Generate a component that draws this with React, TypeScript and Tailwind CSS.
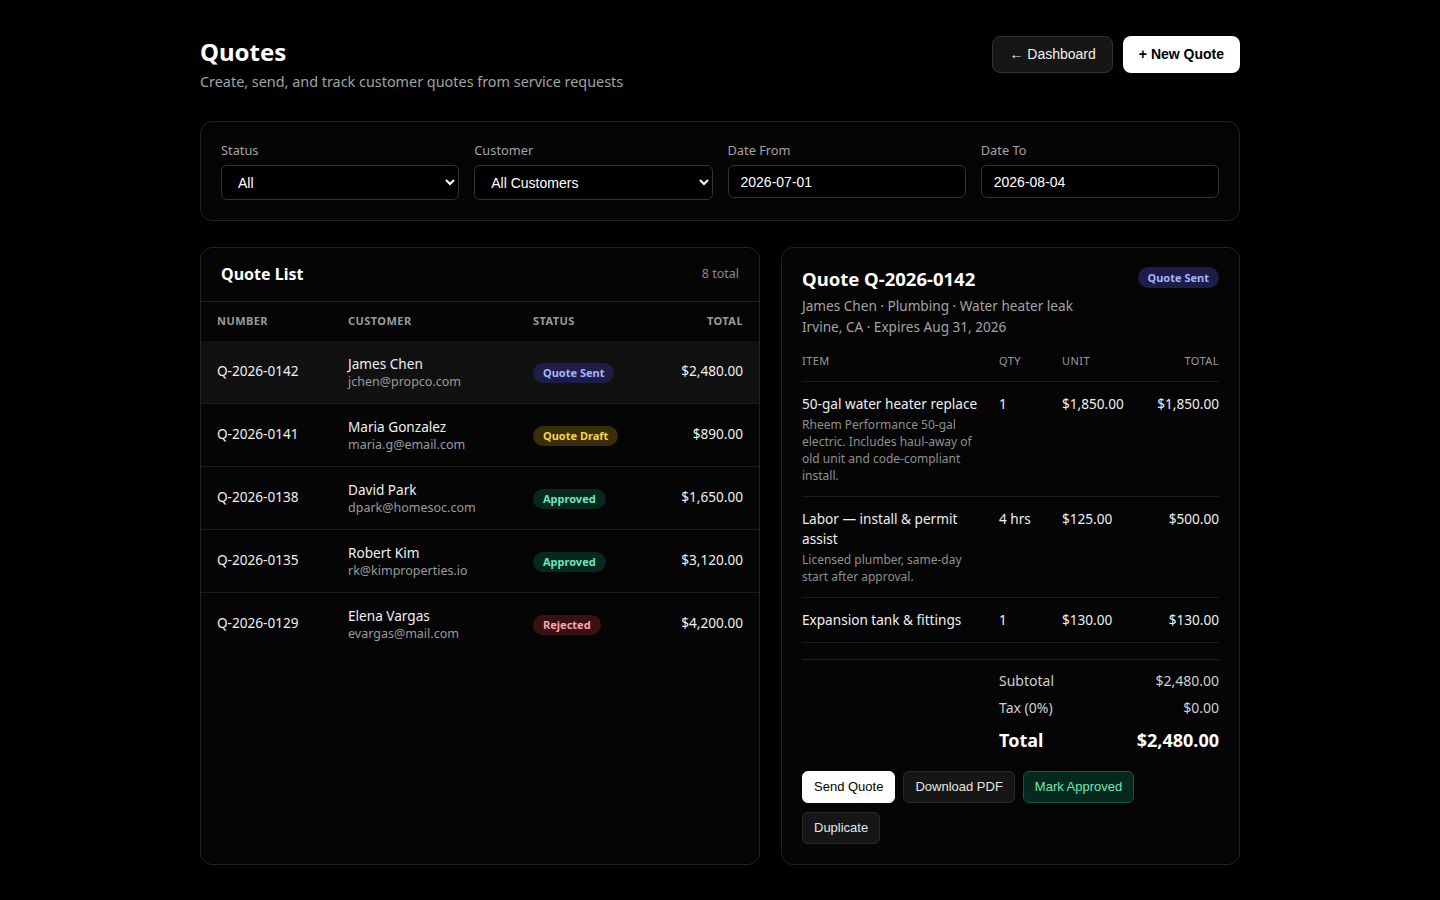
import { useState } from "react";

type Status = "Quote Sent" | "Quote Draft" | "Approved" | "Rejected";

type Quote = {
  number: string;
  name: string;
  email: string;
  status: Status;
  total: string;
};

const quotes: Quote[] = [
  { number: "Q-2026-0142", name: "James Chen", email: "jchen@propco.com", status: "Quote Sent", total: "$2,480.00" },
  { number: "Q-2026-0141", name: "Maria Gonzalez", email: "maria.g@email.com", status: "Quote Draft", total: "$890.00" },
  { number: "Q-2026-0138", name: "David Park", email: "dpark@homesoc.com", status: "Approved", total: "$1,650.00" },
  { number: "Q-2026-0135", name: "Robert Kim", email: "rk@kimproperties.io", status: "Approved", total: "$3,120.00" },
  { number: "Q-2026-0129", name: "Elena Vargas", email: "evargas@mail.com", status: "Rejected", total: "$4,200.00" },
];

const items = [
  {
    name: "50-gal water heater replace",
    desc: "Rheem Performance 50-gal electric. Includes haul-away of old unit and code-compliant install.",
    qty: "1",
    unit: "$1,850.00",
    total: "$1,850.00",
  },
  {
    name: "Labor — install & permit assist",
    desc: "Licensed plumber, same-day start after approval.",
    qty: "4 hrs",
    unit: "$125.00",
    total: "$500.00",
  },
  { name: "Expansion tank & fittings", desc: "", qty: "1", unit: "$130.00", total: "$130.00" },
];

const badgeClass: Record<Status, string> = {
  "Quote Sent": "bg-[#1e1c48] text-[#a5b4fc]",
  "Quote Draft": "bg-[#3a2e06] text-[#fcd34d]",
  Approved: "bg-[#05291f] text-[#6ee7b7]",
  Rejected: "bg-[#3a1112] text-[#fca5a5]",
};

function Badge({ status }: { status: Status }) {
  return (
    <span className={`inline-block rounded-full px-2.5 py-[3px] text-[11px] font-bold leading-[14px] ${badgeClass[status]}`}>
      {status}
    </span>
  );
}

const controlFont = { fontFamily: '"Liberation Sans", Arial, sans-serif' };

export default function App() {
  const [selected, setSelected] = useState("Q-2026-0142");

  return (
    <div
      className="min-h-screen bg-black text-[#f5f5f5] [color-scheme:dark]"
      style={{ fontFamily: '"Noto Sans", "Open Sans", sans-serif' }}
    >
      <div className="mx-auto w-[1040px] pt-9 pb-9">
        {/* Encabezado */}
        <div className="flex items-start justify-between">
          <div>
            <h1 className="text-[24px] font-bold leading-8 text-white">Quotes</h1>
            <p className="mt-[2px] text-[14.4px] leading-6 text-[#a3a3a3]">
              Create, send, and track customer quotes from service requests
            </p>
          </div>
          <div className="flex gap-2.5" style={controlFont}>
            <button className="h-[37px] rounded-lg border border-[#333] bg-[#161616] px-4 text-[14px] text-[#f0f0f0]">
              ← Dashboard
            </button>
            <button className="h-[37px] rounded-lg bg-white px-4 text-[14px] font-bold text-black">+ New Quote</button>
          </div>
        </div>

        {/* Filtros */}
        <div className="mt-[27px] grid grid-cols-4 gap-[15px] rounded-xl border border-[#222] bg-[#050505] px-5 pt-[18px] pb-5">
          <div>
            <label className="block text-[12.8px] leading-5 text-[#a3a3a3]">Status</label>
            <select
              className="mt-[5px] h-[35px] w-full rounded-md border border-[#333] bg-black px-3 text-[14px] text-white"
              style={controlFont}
            >
              <option>All</option>
            </select>
          </div>
          <div>
            <label className="block text-[12.8px] leading-5 text-[#a3a3a3]">Customer</label>
            <select
              className="mt-[5px] h-[35px] w-full rounded-md border border-[#333] bg-black px-3 text-[14px] text-white"
              style={controlFont}
            >
              <option>All Customers</option>
            </select>
          </div>
          <div>
            <label className="block text-[12.8px] leading-5 text-[#a3a3a3]">Date From</label>
            <input
              type="text"
              defaultValue="2026-07-01"
              className="mt-[5px] h-[33px] w-full rounded-md border border-[#333] bg-black px-3 text-[14px] text-white"
              style={controlFont}
            />
          </div>
          <div>
            <label className="block text-[12.8px] leading-5 text-[#a3a3a3]">Date To</label>
            <input
              type="text"
              defaultValue="2026-08-04"
              className="mt-[5px] h-[33px] w-full rounded-md border border-[#333] bg-black px-3 text-[14px] text-white"
              style={controlFont}
            />
          </div>
        </div>

        <div className="mt-[26px] grid grid-cols-[560px_1fr] gap-[21px]">
          {/* Lista de cotizaciones */}
          <div className="overflow-hidden rounded-xl border border-[#222] bg-[#050505]">
            <div className="flex items-center justify-between border-b border-[#222] px-5 py-4">
              <h2 className="text-[16px] font-bold leading-[21px] text-white">Quote List</h2>
              <span className="text-[12.5px] text-[#8a8a8a]">8 total</span>
            </div>
            <table className="w-full text-left">
              <thead>
                <tr className="text-[11px] font-bold uppercase tracking-[0.04em] text-[#9a9a9a]">
                  <th className="w-[131px] px-4 py-[11px] font-bold">Number</th>
                  <th className="w-[185px] px-4 py-[11px] font-bold">Customer</th>
                  <th className="px-4 py-[11px] font-bold">Status</th>
                  <th className="px-4 py-[11px] text-right font-bold">Total</th>
                </tr>
              </thead>
              <tbody>
                {quotes.map((q) => (
                  <tr
                    key={q.number}
                    onClick={() => setSelected(q.number)}
                    className={`cursor-pointer border-b border-[#1c1c1c] last:border-b-0 ${selected === q.number ? "bg-[#111]" : ""}`}
                  >
                    <td className="px-4 py-[13px] text-[13.6px] text-[#f0f0f0]">{q.number}</td>
                    <td className="px-4 py-[13px]">
                      <div className="text-[13.6px] leading-[19px] text-[#f0f0f0]">{q.name}</div>
                      <div className="text-[12.5px] leading-[17px] text-[#9a9a9a]">{q.email}</div>
                    </td>
                    <td className="px-4 pt-[10px] pb-3">
                      <Badge status={q.status} />
                    </td>
                    <td className="px-4 py-[13px] text-right text-[13.6px] text-[#f0f0f0]">{q.total}</td>
                  </tr>
                ))}
              </tbody>
            </table>
          </div>

          {/* Detalle de cotización */}
          <div className="rounded-xl border border-[#222] bg-[#050505] p-5">
            <div className="flex items-start justify-between">
              <h2 className="text-[18.5px] font-bold leading-[22px] text-white">Quote Q-2026-0142</h2>
              <span className="-mt-[1px] inline-block rounded-full bg-[#1e1c48] px-2.5 py-[3px] text-[11px] font-bold leading-[15px] text-[#a5b4fc]">
                Quote Sent
              </span>
            </div>
            <p className="mt-[5px] text-[13.6px] leading-[21px] text-[#a3a3a3]">James Chen · Plumbing · Water heater leak</p>
            <p className="text-[13.6px] leading-[21px] text-[#a3a3a3]">Irvine, CA · Expires Aug 31, 2026</p>

            <table className="mt-1 w-full text-left">
              <thead>
                <tr className="border-b border-[#1c1c1c] text-[11px] uppercase tracking-[0.04em] text-[#9a9a9a]">
                  <th className="w-[197px] py-3 font-normal leading-4">Item</th>
                  <th className="w-[63px] py-3 font-normal leading-4">Qty</th>
                  <th className="py-3 font-normal leading-4">Unit</th>
                  <th className="py-3 text-right font-normal leading-4">Total</th>
                </tr>
              </thead>
              <tbody>
                {items.map((it) => (
                  <tr key={it.name} className="border-b border-[#1c1c1c] align-top text-[13.6px] text-[#f0f0f0]">
                    <td className="py-3 pr-4">
                      <div className="leading-5">{it.name}</div>
                      {it.desc && <div className="mt-0.5 text-[12px] leading-[17px] text-[#8f8f8f]">{it.desc}</div>}
                    </td>
                    <td className="py-3 leading-5">{it.qty}</td>
                    <td className="py-3 leading-5">{it.unit}</td>
                    <td className="py-3 text-right leading-5">{it.total}</td>
                  </tr>
                ))}
              </tbody>
            </table>

            <div className="mt-4 border-t border-[#222] pt-[11px]">
              <div className="ml-auto flex w-[220px] flex-col gap-[7px] text-[14px] text-[#cfcfcf]">
                <div className="flex justify-between leading-5">
                  <span>Subtotal</span>
                  <span>$2,480.00</span>
                </div>
                <div className="flex justify-between leading-5">
                  <span>Tax (0%)</span>
                  <span>$0.00</span>
                </div>
                <div className="mt-[1px] flex justify-between text-[18px] font-bold leading-7 text-white">
                  <span>Total</span>
                  <span>$2,480.00</span>
                </div>
              </div>
            </div>

            <div className="mt-[17px] flex max-w-[360px] flex-wrap gap-x-2 gap-y-[9px]" style={controlFont}>
              <button className="h-8 rounded-md border border-white bg-white px-[11px] text-[13px] text-black">Send Quote</button>
              <button className="h-8 rounded-md border border-[#2a2a2a] bg-[#161616] px-[11px] text-[13px] text-[#e5e5e5]">
                Download PDF
              </button>
              <button className="h-8 rounded-md border border-[#11583c] bg-[#05291e] px-[11px] text-[13px] text-[#6ee7b7]">
                Mark Approved
              </button>
              <button className="h-8 rounded-md border border-[#2a2a2a] bg-[#161616] px-[11px] text-[13px] text-[#e5e5e5]">
                Duplicate
              </button>
            </div>
          </div>
        </div>
      </div>
    </div>
  );
}
